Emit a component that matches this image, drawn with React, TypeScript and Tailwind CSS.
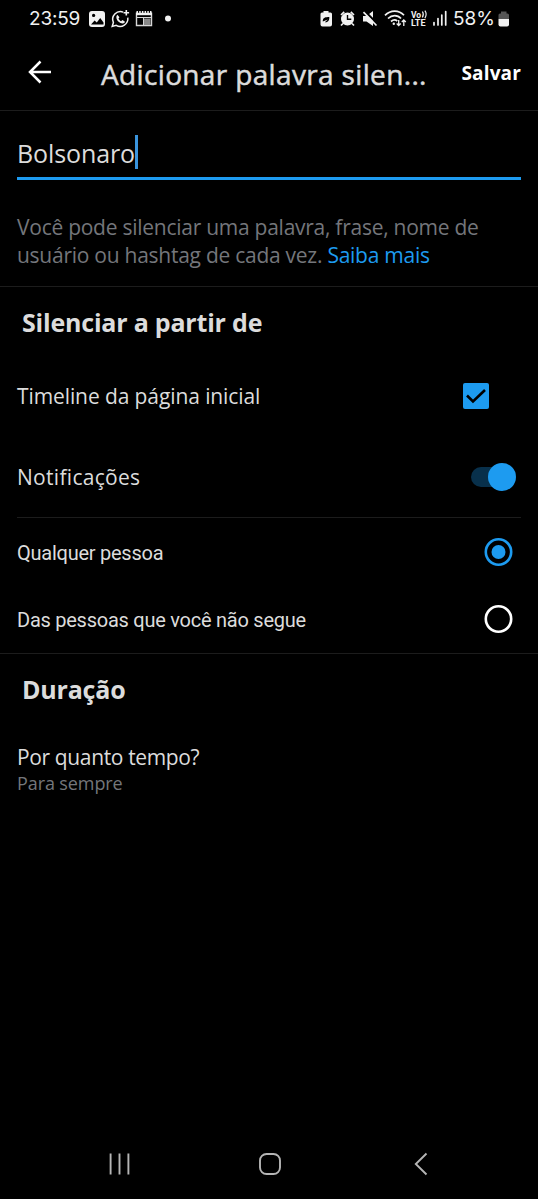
import React, { useState } from 'react'

const StatusIcons: React.FC = () => (
  <svg width="90" height="22" viewBox="86 8 90 22" className="ml-[5px] shrink-0" fill="none">
    <rect x="89" y="11" width="16" height="16" rx="3" fill="#f1f1f1" />
    <circle cx="93.6" cy="15.4" r="1.6" fill="#000" />
    <path d="M91 24.5l3.6-4 2.2 2 3.4-4.5 3.3 4.5v2z" fill="#000" />
    <path d="M123.2 12.1A7.8 7.8 0 0 0 113.4 22.6L112.2 26.4L116.2 25.3A7.8 7.8 0 0 0 127.8 17.6" stroke="#f1f1f1" strokeWidth="1.5" />
    <path d="M117.4 14.8c-2.4 1.9-.6 8 5.2 8.7c1.7-.2 2.2-1 2.2-2.1l-2.4-1.3-1.3 1.2c-1.3-.5-2.2-1.5-2.6-2.7l1-1.3z" fill="#f1f1f1" />
    <path d="M126.3 10v5.6M123.5 12.8h5.6" stroke="#f1f1f1" strokeWidth="1.6" />
    <path d="M136.5 12.5v13h15v-13" stroke="#d6d6d6" strokeWidth="1.4" />
    <path d="M136 14h16" stroke="#f1f1f1" strokeWidth="2.4" />
    <path d="M136.5 12h15" stroke="#f1f1f1" strokeWidth="1.8" strokeDasharray="1.5 1.2" />
    <path d="M137 17.5h14M143.5 17.5v8" stroke="#d6d6d6" />
    <rect x="144" y="18.5" width="6.5" height="6.5" fill="#888" />
    <circle cx="168" cy="18.5" r="3" fill="#f1f1f1" />
  </svg>
)

const SystemIcons: React.FC = () => (
  <svg width="130" height="22" viewBox="319 8 130 22" className="shrink-0" fill="none">
    <path d="M323.5 11h5v1.5h2q1.5 0 1.5 1.5v10.5q0 2-2 2h-7.5q-2 0-2-2V14q0-1.5 1.5-1.5h1.5z" fill="#f1f1f1" />
    <path d="M322.8 21.5c-.3-4 3-4.5 6.5-4.5c.3 4-1.8 5.5-4.5 5.2l3-2.7" fill="#000" />
    <circle cx="347.5" cy="19" r="6.5" fill="#f1f1f1" />
    <path d="M341 15l3.2-3.2M354 15l-3.2-3.2M343 23.5l-2 2M352 23.5l2 2" stroke="#f1f1f1" strokeWidth="1.7" />
    <path d="M347.5 15v4.3h3.8" stroke="#000" strokeWidth="1.4" />
    <path d="M363 16h3.5l6.500-5v15l-6.500-4.500H363z" fill="#f1f1f1" />
    <path d="M365 11.5L378.5 25" stroke="#000" strokeWidth="2.4" />
    <path d="M363.5 12.2L376.5 25.5" stroke="#f1f1f1" strokeWidth="1.7" />
    <path d="M385 15.3c5.5-5.7 14-5.7 19 0M388 18.5c4-3.9 9.5-3.9 13 0M391 21.5c2.2-2 4.5-2 6.3-.5" stroke="#f1f1f1" strokeWidth="1.7" />
    <circle cx="393.8" cy="23.7" r="1.2" fill="#f1f1f1" />
    <path d="M398.7 20v5M396.7 23.5l2 2 2-2M403.8 26v-5.5M401.8 22l2-2 2 2" stroke="#f1f1f1" strokeWidth="1.3" />
    <text x="411" y="17.5" fill="#f1f1f1" fontSize="8.5" fontWeight="700" fontFamily="Roboto, sans-serif">Vo</text>
    <path d="M422.4 11.5q1.8 2.7 0 6M424.9 10.700q2.500 3.500 0 7.500" stroke="#f1f1f1" strokeWidth="1.2" />
    <text x="411" y="26" fill="#f1f1f1" fontSize="9" fontWeight="700" fontFamily="Roboto, sans-serif">LTE</text>
    <path d="M434 22.5v2.500M438 18.5v6.5M441.8 15v10M445.7 11.5v13.5" stroke="#f1f1f1" strokeWidth="1.7" strokeLinecap="round" />
  </svg>
)

const StatusBar: React.FC = () => (
  <div className="flex h-[37px] items-center justify-between pl-[29px] pr-[28px] font-[Inter,sans-serif] text-[19px] leading-[22px] text-[#f1f1f1]">
    <div className="flex items-center">
      <span className="w-[52px] tracking-[-0.2px]">23:59</span>
      <StatusIcons />
    </div>
    <div className="flex items-center">
      <SystemIcons />
      <span className="ml-[4px] w-[42px]">58%</span>
      <svg width="12" height="22" viewBox="0 0 12 22" className="ml-[3px]">
        <path d="M3 3.5h5.5v2h1Q11 5.5 11 7v4H.5V7Q.5 5.5 2 5.5h1z" fill="#555" />
        <path d="M.5 11H11v5.5q0 2-2 2H2.5q-2 0-2-2z" fill="#f1f1f1" />
      </svg>
    </div>
  </div>
)

const Radio: React.FC<{ checked: boolean }> = ({ checked }) => (
  <svg width="29" height="28" viewBox="0 0 29 28" fill="none">
    <circle cx="14.5" cy="14" r="12.7" stroke={checked ? '#1d9bf0' : '#fff'} strokeWidth="2.6" />
    {checked && <circle cx="14.5" cy="14" r="7" fill="#1d9bf0" />}
  </svg>
)

const App: React.FC = () => {
  const [timeline, setTimeline] = useState(true)
  const [notifications, setNotifications] = useState(true)
  const [audience, setAudience] = useState('anyone')

  return (
    <div className="flex h-[1199px] w-[538px] flex-col overflow-hidden bg-black font-['Open_Sans',sans-serif] whitespace-nowrap text-[#dcdcdc]">
      <StatusBar />

      <header className="flex h-[74px] items-center border-b border-[#1c1c1c] pl-[28px] pr-[17px]">
        <button aria-label="Voltar" className="-mt-[3px]">
          <svg width="24" height="24" viewBox="0 0 24 24" fill="none" stroke="#fff" strokeWidth="2.5">
            <path d="M23 12H2M12.5 1.5L2 12l10.5 10.5" />
          </svg>
        </button>
        <h1 className="ml-[49px] text-[28px] leading-[34px] tracking-[0.35px] [-webkit-text-stroke:0.5px_#dcdcdc]">Adicionar palavra silen...</h1>
        <button className="ml-auto -mt-px text-[19px] font-bold leading-[24px] tracking-[0.15px] text-white">Salvar</button>
      </header>

      <main className="flex-1">
        <section className="h-[176px] border-b border-[#1c1c1c] px-[17px] pt-[24px]">
          <div className="flex h-[45px] items-start border-b-[3px] border-[#1d9bf0]">
            <span className="pt-px text-[25px] leading-[34px] tracking-[-0.1px]">Bolsonaro</span>
            <span className="h-[34px] w-[3px] bg-[#3a94dc]" />
          </div>
          <p className="mt-[33px] text-[21px] leading-[28px] tracking-[-0.26px] text-[#74767b]">
            Você pode silenciar uma palavra, frase, nome de
            <br />
            usuário ou hashtag de cada vez. <a className="text-[#1d9bf0]">Saiba mais</a>
          </p>
        </section>

        <section className="h-[367px] border-b border-[#1c1c1c] px-[17px]">
          <h2 className="pl-[5px] pt-[19px] text-[25px] font-bold leading-[32px] tracking-[-0.2px]">Silenciar a partir de</h2>
          <div className="mt-[18px] flex h-[80px] items-center justify-between pr-[32px] text-[21px] tracking-[-0.1px]">
            <span className="pt-[2px]">Timeline da página inicial</span>
            <button
              role="checkbox"
              aria-checked={timeline}
              onClick={() => setTimeline(!timeline)}
              className="flex h-[26px] w-[26px] items-center justify-center rounded-[2px] bg-[#1d9bf0]"
            >
              {timeline && (
                <svg width="22" height="20" viewBox="0 0 22 20" fill="none" stroke="#000" strokeWidth="2.6">
                  <path d="M2 9.5l6 6L20 4" />
                </svg>
              )}
            </button>
          </div>
          <div className="flex h-[82px] items-center justify-between border-b border-[#1c1c1c] pr-[5px] text-[21px] tracking-[0.3px]">
            <span className="pt-[2px]">Notificações</span>
            <button
              role="switch"
              aria-checked={notifications}
              onClick={() => setNotifications(!notifications)}
              className="flex h-[28px] w-[45px] items-center"
            >
              <span className="h-[20px] w-[32px] shrink-0 rounded-full bg-[#08304b]" />
              <span className="-ml-[15px] h-[28px] w-[28px] shrink-0 rounded-full bg-[#1d9bf0]" />
            </button>
          </div>
          <div className="flex h-[67px] items-center justify-between pr-[8px] font-[Roboto,sans-serif] text-[20px] tracking-[-0.25px]">
            <span className="pt-[2px]">Qualquer pessoa</span>
            <button onClick={() => setAudience('anyone')}>
              <Radio checked={audience === 'anyone'} />
            </button>
          </div>
          <div className="flex h-[67px] items-center justify-between pr-[8px] font-[Roboto,sans-serif] text-[20px] tracking-[-0.25px]">
            <span className="pt-[2px]">Das pessoas que você não segue</span>
            <button onClick={() => setAudience('notFollowed')}>
              <Radio checked={audience === 'notFollowed'} />
            </button>
          </div>
        </section>

        <section className="px-[17px]">
          <h2 className="pl-[5px] pt-[19px] text-[25px] font-bold leading-[32px] tracking-[-0.2px]">Duração</h2>
          <div className="mt-[38px]">
            <div className="text-[21px] leading-[28px] tracking-[-0.36px]">Por quanto tempo?</div>
            <div className="text-[18px] leading-[24px] tracking-[-0.1px] text-[#74767b]">Para sempre</div>
          </div>
        </section>
      </main>

      <nav className="flex h-[70px] items-center pl-[109px]">
        <svg width="22" height="24" viewBox="0 0 22 24" stroke="#b5b5b5" strokeWidth="1.9">
          <path d="M1.6 1.5v21M10.5 1.5v21M19.4 1.5v21" />
        </svg>
        <svg width="24" height="24" viewBox="0 0 24 24" fill="none" stroke="#b5b5b5" strokeWidth="1.9" className="ml-[127px]">
          <rect x="2" y="2" width="20" height="20" rx="6.5" />
        </svg>
        <svg width="14" height="24" viewBox="0 0 14 24" fill="none" stroke="#b5b5b5" strokeWidth="1.9" className="ml-[132px]">
          <path d="M12.5 1.5L1.8 12l10.7 10.5" />
        </svg>
      </nav>
    </div>
  )
}

export default App
